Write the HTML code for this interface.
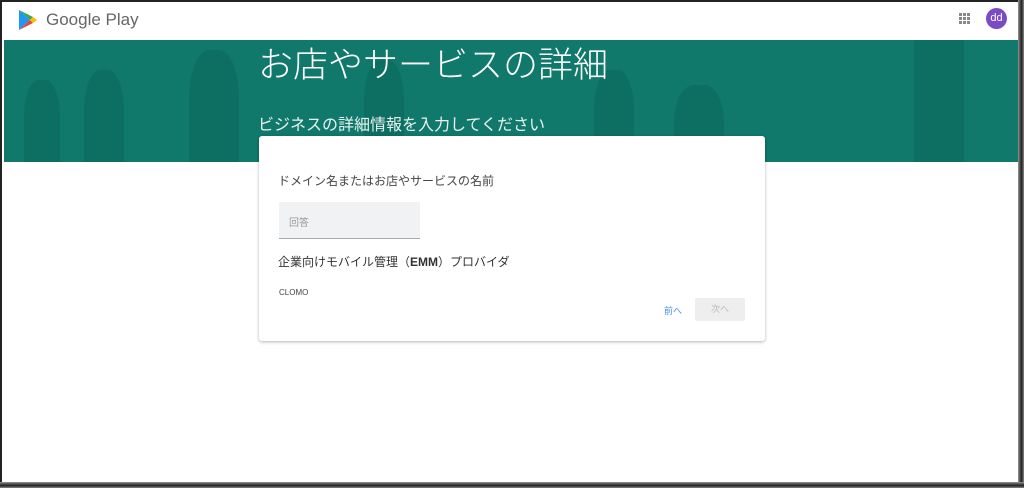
<!DOCTYPE html>
<html><head><meta charset="utf-8"><style>
body{margin:0;width:1024px;height:488px;background:#fff;position:relative;overflow:hidden;font-family:"Liberation Sans","Noto Sans CJK JP",sans-serif}
.frame{position:absolute;left:0;top:0;width:1024px;height:488px;box-sizing:border-box;border:2px solid #222;border-right:none;border-bottom:none}
.rb{position:absolute;left:1018px;top:0;width:6px;height:488px;background:linear-gradient(90deg,#999,#555 30%,#222 60%,#888)}
.bb{position:absolute;left:0;top:482px;width:1024px;height:6px;background:linear-gradient(180deg,#999,#555 30%,#222 60%,#888)}
.band{position:absolute;left:4px;top:40px;width:1014px;height:122px;background:#10796b;overflow:hidden}
.band div{position:absolute;background:#0d6f62;border-radius:40% 40% 10% 10%}
.h1{position:absolute;left:258px;top:37px;font-size:35px;color:#fff;font-weight:300}
.h2{position:absolute;left:258px;top:111px;font-size:16px;color:#e8f2f0}
.card{position:absolute;left:259px;top:136px;width:506px;height:205px;background:#fff;border-radius:3px;box-shadow:0 1px 3px rgba(0,0,0,.3)}
</style></head><body>
<div class="frame"></div>
<svg style="position:absolute;left:18px;top:9px" width="20" height="22" viewBox="0 0 20 22"><path d="M1 1 L12 11 L1 21Z" fill="#2196f3"/><path d="M1 1 L12 11 L15 8Z" fill="#34a853"/><path d="M1 21 L12 11 L15 14Z" fill="#ea4335"/><path d="M15 8 L19 11 L15 14 L12 11Z" fill="#fbbc04"/></svg>
<div style="position:absolute;left:46px;top:10px;font-size:17px;color:#666">Google Play</div>
<div style="position:absolute;left:959px;top:13px;width:11px;height:11px;background:repeating-linear-gradient(90deg,#888 0 3px,transparent 3px 4px);-webkit-mask:repeating-linear-gradient(0deg,#000 0 3px,transparent 3px 4px)"></div>
<div style="position:absolute;left:986px;top:8px;width:21px;height:21px;border-radius:50%;background:#7b4bc4;color:#fff;font-size:11px;text-align:center;line-height:21px">dd</div>
<div class="band">
<div style="left:20px;top:40px;width:36px;height:90px"></div>
<div style="left:80px;top:30px;width:40px;height:100px"></div>
<div style="left:185px;top:10px;width:50px;height:120px"></div>
<div style="left:360px;top:20px;width:40px;height:100px"></div>
<div style="left:590px;top:30px;width:40px;height:100px"></div>
<div style="left:670px;top:45px;width:50px;height:90px"></div>
<div style="left:910px;top:0;width:50px;height:130px;border-radius:0"></div>
</div>
<div class="h1">お店やサービスの詳細</div>
<div class="h2">ビジネスの詳細情報を入力してください</div>
<div class="card">
<div style="position:absolute;left:19px;top:36px;font-size:12px;color:#444">ドメイン名またはお店やサービスの名前</div>
<div style="position:absolute;left:20px;top:66px;width:141px;height:36px;background:#f1f2f3;border-bottom:1px solid #aaa"><span style="position:absolute;left:10px;top:12px;font-size:10px;color:#999">回答</span></div>
<div style="position:absolute;left:19px;top:117px;font-size:12px;color:#333">企業向けモバイル管理（<b>EMM</b>）プロバイダ</div>
<div style="position:absolute;left:20px;top:152px;font-size:8px;color:#444">CLOMO</div>
<div style="position:absolute;left:405px;top:168px;font-size:9px;color:#4a8ef0">前へ</div>
<div style="position:absolute;left:436px;top:162px;width:50px;height:23px;background:#eee;border-radius:2px;font-size:9px;color:#bbb;text-align:center;line-height:23px">次へ</div>
</div>
<div class="rb"></div><div class="bb"></div>
</body></html>
